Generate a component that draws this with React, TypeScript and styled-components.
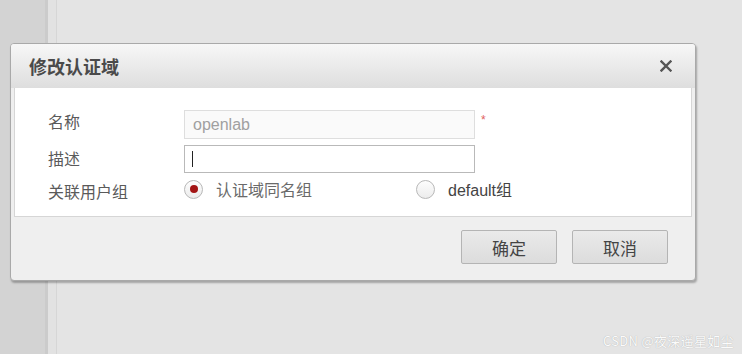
import React from "react";
import styled, { createGlobalStyle } from "styled-components";

const Global = createGlobalStyle`
  html, body { margin: 0; padding: 0; }
  body { width: 742px; height: 354px; overflow: hidden; background: #e4e4e4; font-family: "Noto Sans CJK SC", "Liberation Sans", sans-serif; }
  #root { width: 742px; height: 354px; position: relative; }
`;

const Page = styled.div`
  display: grid;
  grid-template-columns: 45px 3px 8px 1px 1fr;
  width: 742px;
  height: 354px;
`;

const Strip = styled.div<{ $c: string }>`
  background: ${(p) => p.$c};
`;

const Dialog = styled.div`
  position: absolute;
  left: 10px;
  top: 43px;
  width: 684px;
  height: 236px;
  border: 1px solid #a9a9a9;
  border-radius: 4px;
  background: #efefef;
  box-shadow: 1px 2px 2px rgba(0, 0, 0, 0.28);
  display: flex;
  flex-direction: column;
  overflow: hidden;
`;

const Header = styled.div`
  height: 44px;
  flex: none;
  display: flex;
  align-items: center;
  justify-content: space-between;
  padding: 0 22px 0 18px;
  background: linear-gradient(#f7f7f7, #dedede);
`;

const Title = styled.div`
  font-family: "Noto Sans CJK SC", sans-serif;
  font-weight: 700;
  font-size: 18px;
  color: #4a4a4a;
`;

const Close = styled.div`
  width: 14px;
  height: 14px;
  display: flex;
  align-items: center;
  justify-content: center;
`;

const Body = styled.div`
  margin: 0 3px;
  height: 129px;
  flex: none;
  background: #ffffff;
  border: 1px solid #d6d6d6;
  border-top: none;
  box-sizing: border-box;
  padding: 22px 0 0 33px;
  display: grid;
  grid-template-columns: 136px 1fr;
  grid-template-rows: 29px 28px 20px;
  row-gap: 6px;
  align-items: center;
`;

const Label = styled.div<{ $shift?: number }>`
  font-size: 16px;
  color: #5a5a5a;
  margin-top: ${(p) => p.$shift ?? 0}px;
  line-height: 20px;
`;

const Field = styled.div`
  display: flex;
  align-items: center;
  gap: 6px;
  height: 100%;
`;

const Input = styled.div<{ $disabled?: boolean }>`
  width: 291px;
  height: 100%;
  box-sizing: border-box;
  border: 1px solid ${(p) => (p.$disabled ? "#dedede" : "#b9b9b9")};
  background: ${(p) => (p.$disabled ? "#fafafa" : "#ffffff")};
  display: flex;
  align-items: center;
  padding-left: 8px;
  font-family: "Liberation Sans", Arial, sans-serif;
  font-size: 16px;
  color: #a0a0a0;
`;

const Caret = styled.span`
  width: 1px;
  height: 16px;
  background: #222;
  margin-left: -1px;
`;

const Star = styled.span`
  color: #e06060;
  font-size: 12px;
  align-self: flex-start;
  margin-top: 3px;
  font-family: "Liberation Sans", sans-serif;
`;

const Radios = styled.div`
  display: flex;
  align-items: center;
`;

const RadioItem = styled.label<{ $w: number }>`
  display: flex;
  align-items: center;
  gap: 13px;
  width: ${(p) => p.$w}px;
`;

const RadioCircle = styled.span<{ $on?: boolean }>`
  width: 19px;
  height: 19px;
  box-sizing: border-box;
  border-radius: 50%;
  border: 1px solid #b8b8b8;
  background: linear-gradient(#fdfdfd, #ececec);
  display: flex;
  align-items: center;
  justify-content: center;
  &::after {
    content: "";
    display: ${(p) => (p.$on ? "block" : "none")};
    width: 8px;
    height: 8px;
    border-radius: 50%;
    background: #a31515;
  }
`;

const RadioText = styled.span<{ $latin?: boolean }>`
  font-size: 16px;
  color: ${(p) => (p.$latin ? "#444" : "#6a6a6a")};
  font-family: ${(p) => (p.$latin ? '"Liberation Sans", "Noto Sans CJK SC", sans-serif' : '"Noto Sans CJK SC", sans-serif')};
`;

const Footer = styled.div`
  flex: 1;
  display: flex;
  justify-content: flex-end;
  align-items: flex-start;
  gap: 15px;
  padding: 13px 27px 0 0;
`;

const Button = styled.button`
  width: 96px;
  height: 34px;
  box-sizing: border-box;
  border: 1px solid #b4b4b4;
  border-radius: 2px;
  background: linear-gradient(#eaeaea, #dcdcdc);
  font-family: "Noto Sans CJK SC", sans-serif;
  font-size: 17px;
  color: #444;
  padding: 0;
`;

const Watermark = styled.div`
  position: absolute;
  left: 603px;
  top: 331px;
  font-size: 13px;
  color: #fbfbfb;
  text-shadow: 0 0 1px #a0a0a0;
  font-family: "Noto Sans CJK SC", sans-serif;
  letter-spacing: 0.3px;
`;

export default function App() {
  return (
    <>
      <Global />
      <Page>
        <Strip $c="#d3d3d3" />
        <Strip $c="#cbcbcb" />
        <Strip $c="#e2e2e2" />
        <Strip $c="#d6d6d6" />
        <Strip $c="#e4e4e4" />
      </Page>
      <Dialog>
        <Header>
          <Title>修改认证域</Title>
          <Close>
            <svg width="12" height="12" viewBox="0 0 12 12">
              <path d="M1.5 1.5 L10.5 10.5 M10.5 1.5 L1.5 10.5" stroke="#555" strokeWidth="2.4" strokeLinecap="square" />
            </svg>
          </Close>
        </Header>
        <Body>
          <Label $shift={-7}>名称</Label>
          <Field>
            <Input $disabled>openlab</Input>
            <Star>*</Star>
          </Field>
          <Label $shift={-3}>描述</Label>
          <Field>
            <Input>
              <Caret />
            </Input>
          </Field>
          <Label $shift={4}>关联用户组</Label>
          <Radios>
            <RadioItem $w={232}>
              <RadioCircle $on />
              <RadioText>认证域同名组</RadioText>
            </RadioItem>
            <RadioItem $w={120}>
              <RadioCircle />
              <RadioText $latin>default组</RadioText>
            </RadioItem>
          </Radios>
        </Body>
        <Footer>
          <Button>确定</Button>
          <Button>取消</Button>
        </Footer>
      </Dialog>
      <Watermark>CSDN @夜深遥星如尘</Watermark>
    </>
  );
}
